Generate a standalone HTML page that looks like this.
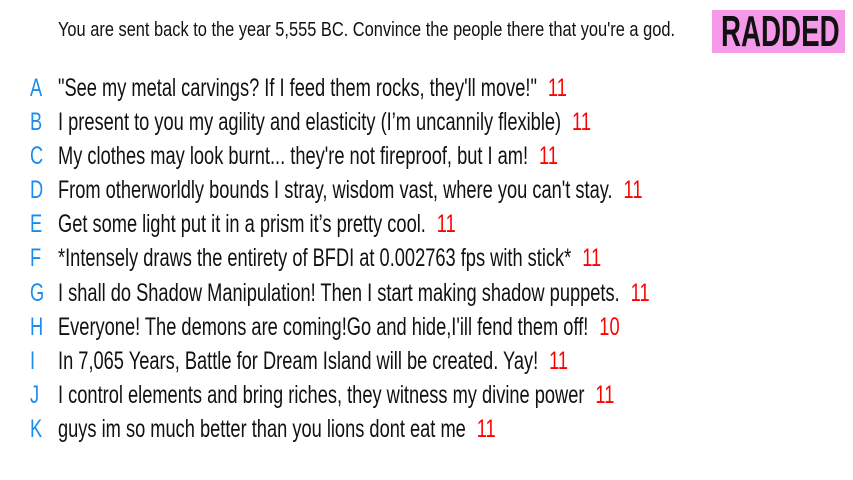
<!DOCTYPE html>
<html><head><meta charset="utf-8"><style>
body{margin:0;width:853px;height:480px;background:#fff;overflow:hidden;font-family:"Liberation Sans",sans-serif;color:#111;}
.t{position:absolute;left:58px;top:19px;font-size:20px;white-space:nowrap;transform:scaleX(0.82);transform-origin:0 0;}
.r{position:absolute;left:712px;top:10px;width:133px;height:43px;background:#f59ae8;}
.r div{position:absolute;left:9px;top:-3px;font-size:44px;font-weight:bold;line-height:50px;color:#111;transform:scaleX(0.63);transform-origin:0 0;white-space:nowrap;}
.row{position:absolute;left:0;height:30px;line-height:30px;font-size:25px;white-space:nowrap;}
.row b{position:absolute;left:30px;font-weight:normal;color:#1a8cf0;transform:scaleX(0.73);transform-origin:0 0;}
.row span{position:absolute;left:58px;transform:scaleX(0.73);transform-origin:0 0;}
.row i{font-style:normal;color:#f00;margin-left:15px;}
</style></head><body>
<div class="t">You are sent back to the year 5,555 BC. Convince the people there that you're a god.</div>
<div class="r"><div>RADDED</div></div>
<div class="row" style="top:73px"><b>A</b><span>"See my metal carvings? If I feed them rocks, they'll move!"<i>11</i></span></div>
<div class="row" style="top:107px"><b>B</b><span>I present to you my agility and elasticity (I’m uncannily flexible)<i>11</i></span></div>
<div class="row" style="top:141px"><b>C</b><span>My clothes may look burnt... they're not fireproof, but I am!<i>11</i></span></div>
<div class="row" style="top:175px"><b>D</b><span>From otherworldly bounds I stray, wisdom vast, where you can't stay.<i>11</i></span></div>
<div class="row" style="top:209px"><b>E</b><span>Get some light put it in a prism it’s pretty cool.<i>11</i></span></div>
<div class="row" style="top:243px"><b>F</b><span>*Intensely draws the entirety of BFDI at 0.002763 fps with stick*<i>11</i></span></div>
<div class="row" style="top:278px"><b>G</b><span>I shall do Shadow Manipulation! Then I start making shadow puppets.<i>11</i></span></div>
<div class="row" style="top:312px"><b>H</b><span>Everyone! The demons are coming!Go and hide,I'ill fend them off!<i>10</i></span></div>
<div class="row" style="top:346px"><b>I</b><span>In 7,065 Years, Battle for Dream Island will be created. Yay!<i>11</i></span></div>
<div class="row" style="top:380px"><b>J</b><span>I control elements and bring riches, they witness my divine power<i>11</i></span></div>
<div class="row" style="top:414px"><b>K</b><span>guys im so much better than you lions dont eat me<i>11</i></span></div>
</body></html>
